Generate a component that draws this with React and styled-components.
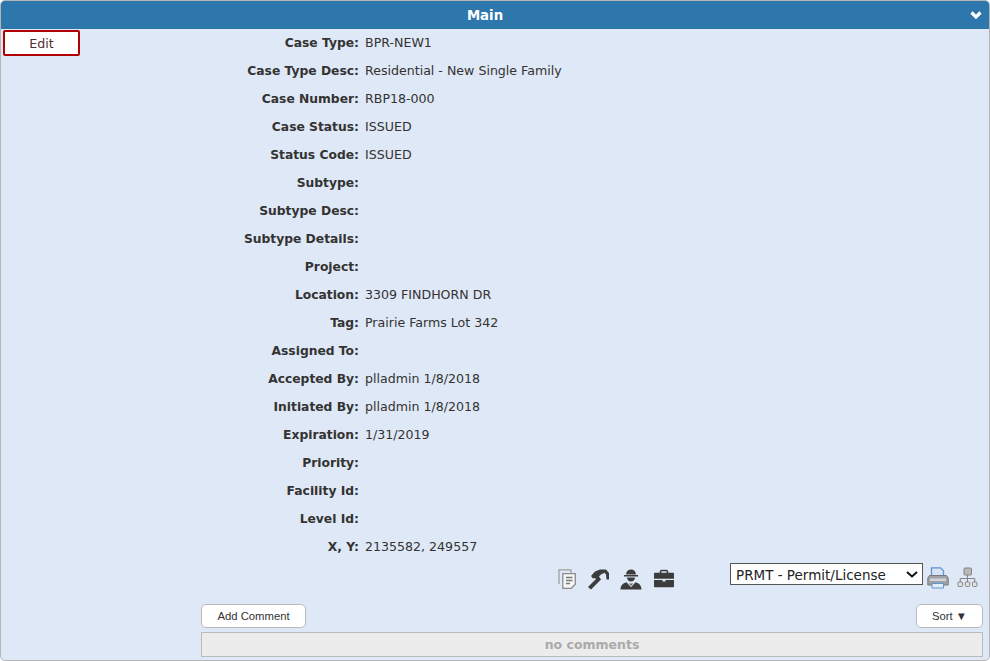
import React from 'react';
import styled, { createGlobalStyle } from 'styled-components';

const GlobalStyle = createGlobalStyle`
  html, body {
    margin: 0;
    padding: 0;
    background: #fff;
  }
  body {
    font-family: "DejaVu Sans", Verdana, sans-serif;
    font-size: 12.6px;
    color: #333;
  }
`;

const Panel = styled.div`
  box-sizing: border-box;
  width: 990px;
  height: 661px;
  display: flex;
  flex-direction: column;
  background: #dfe8f6;
  border: 1px solid #b5b5b5;
  border-radius: 5px;
  overflow: hidden;
`;

const Header = styled.div`
  position: relative;
  height: 28px;
  flex: none;
  display: flex;
  align-items: center;
  justify-content: center;
  padding-right: 20px;
  background: #2e77ad;
  color: #fff;
  font-size: 13.3px;
  font-weight: 700;
`;

const Chevron = styled.svg`
  position: absolute;
  right: 6px;
  top: 9px;
  width: 14px;
  height: 10px;
`;

const Body = styled.div`
  display: flex;
  align-items: flex-start;
  padding: 0 6px 0 2px;
`;

const EditButton = styled.button`
  box-sizing: border-box;
  flex: none;
  width: 77px;
  height: 26px;
  margin-top: 1px;
  background: #fff;
  border: 2px solid #b00000;
  border-radius: 2px;
  color: #4d3030;
  font: 12.6px "DejaVu Sans", Verdana, sans-serif;
  padding: 1px 0 0;
`;

const Fields = styled.div`
  display: flex;
  flex-direction: column;
`;

const Row = styled.div`
  display: flex;
  align-items: baseline;
  height: 28px;
  line-height: 28px;
`;

const Label = styled.div`
  width: 279px;
  text-align: right;
  font-size: 12.3px;
  font-weight: 700;
  white-space: nowrap;
`;

const Value = styled.div`
  margin-left: 6px;
  white-space: nowrap;
`;

const Toolbar = styled.div`
  display: flex;
  align-items: flex-start;
  height: 42px;
  padding-top: 1px;
  box-sizing: border-box;
  margin-top: 1px;
`;

const IconGroup = styled.div`
  display: flex;
  align-items: center;
  gap: 11px;
  margin-left: 557px;
  margin-top: 5px;
  width: 172px;
`;

const SelectWrap = styled.div`
  position: relative;
  width: 193px;
  height: 22px;
`;

const Select = styled.select`
  box-sizing: border-box;
  display: block;
  width: 100%;
  height: 100%;
  appearance: none;
  background: #fff;
  border: 1px solid #555;
  border-radius: 0;
  color: #222;
  font: 13.5px "DejaVu Sans", Verdana, sans-serif;
  padding: 1px 0 0 5px;
`;

const SelectArrow = styled.svg`
  position: absolute;
  right: 5px;
  top: 8px;
  width: 12px;
  height: 7px;
  pointer-events: none;
`;

const ToolIcon = styled.svg`
  display: block;
  flex: none;
  width: ${(p) => p.$w || 22}px;
  height: ${(p) => p.$h || 22}px;
  margin-left: ${(p) => p.$left || 0}px;
  margin-top: ${(p) => p.$top || 0}px;
`;

const CommentBar = styled.div`
  display: flex;
  justify-content: space-between;
  margin: 0 6px 4px 200px;
`;

const SmallButton = styled.button`
  box-sizing: border-box;
  height: 24px;
  width: ${(p) => p.$width}px;
  background: #fff;
  border: 1px solid #bbb;
  border-radius: 5px;
  color: #333;
  font: 11.3px "Liberation Sans", Arial, sans-serif;
  padding: 0;
`;

const NoComments = styled.div`
  box-sizing: border-box;
  height: 25px;
  margin: 0 6px 0 200px;
  display: flex;
  align-items: center;
  justify-content: center;
  background: #ececec;
  border: 1px solid #bbb;
  color: #aaa;
  font-size: 12.5px;
  font-weight: 700;
`;

const fields = [
  ['Case Type:', 'BPR-NEW1'],
  ['Case Type Desc:', 'Residential - New Single Family'],
  ['Case Number:', 'RBP18-000'],
  ['Case Status:', 'ISSUED'],
  ['Status Code:', 'ISSUED'],
  ['Subtype:', ''],
  ['Subtype Desc:', ''],
  ['Subtype Details:', ''],
  ['Project:', ''],
  ['Location:', '3309 FINDHORN DR'],
  ['Tag:', 'Prairie Farms Lot 342'],
  ['Assigned To:', ''],
  ['Accepted By:', 'plladmin 1/8/2018'],
  ['Initiated By:', 'plladmin 1/8/2018'],
  ['Expiration:', '1/31/2019'],
  ['Priority:', ''],
  ['Facility Id:', ''],
  ['Level Id:', ''],
  ['X, Y:', '2135582, 249557'],
];

const CopyIcon = () => (
  <ToolIcon viewBox="0 0 18 20" $w={18} $h={20}>
    <path d="M1 15V.8h12V4" fill="none" stroke="#a0a0a0" strokeWidth="1.300" />
    <path d="M4.800 4.700h12.500v10.500l-4 4.100H4.800z" fill="#f6f6f6" stroke="#8c8c8c" strokeWidth="1.300" />
    <path d="M8 8.500h6.500M8 11.500h6.500M8 14.500h4" stroke="#7a7a7a" strokeWidth="1.300" />
  </ToolIcon>
);

const WrenchIcon = () => (
  <ToolIcon viewBox="0 0 22 22">
    <path
      d="M1 19 4 21.500 14 11.500 12 8.500 14 6.500 17.500 4.800 19 6.500 19.500 11.500H22V5L19 1.500H13L8 3.500 4 8 6 10.500 8 10 9 11z"
      fill="#3c3c3c"
    />
  </ToolIcon>
);

const WorkerIcon = () => (
  <ToolIcon viewBox="0 0 22 22">
    <path d="M4 7h14v1.500H4zM6 6.500C6.300 3.300 8.300 1.500 11 1.500s4.700 1.800 5 5z" fill="#3c3c3c" />
    <path d="M7 9.500h8c-.2 2.500-1.800 4-4 4s-3.800-1.500-4-4z" fill="#3c3c3c" />
    <path d="M.5 21.500c0-4 2.500-6.500 6-7.300l4.500 5 4.500-5c3.500.8 6 3.300 6 7.300z" fill="#3c3c3c" />
    <path d="M8.800 15.500h4.400L11 18z" fill="#6c6c6c" />
  </ToolIcon>
);

const CaseIcon = () => (
  <ToolIcon viewBox="0 0 22 22">
    <path d="M7.500 5.500V3.800c0-.7.500-1.300 1.300-1.300h4.400c.8 0 1.300.6 1.300 1.300v1.700" fill="none" stroke="#3c3c3c" strokeWidth="1.600" />
    <path d="M2 4.800h18c.6 0 1 .4 1 1v5H1v-5c0-.6.400-1 1-1z" fill="#3c3c3c" />
    <path d="M1 12h8.500v1.500h3V12H21v6.200c0 .6-.4 1-1 1H2c-.6 0-1-.4-1-1z" fill="#3c3c3c" />
  </ToolIcon>
);

const PrintIcon = () => (
  <ToolIcon viewBox="0 0 22 22" $left={4} $top={4}>
    <path d="M4.500 10V.8h9l3 3V10z" fill="#d6e4f6" stroke="#5f94cf" strokeWidth="1.300" />
    <path d="M.8 11 2.500 8.500h17L21.200 11v7H.8z" fill="#9ea2a6" stroke="#777b80" />
    <path d="M3 11.500h16v2.500H3z" fill="#d2d5d8" />
    <path d="M5 16.500h11.500v4.500H5z" fill="#e4edf8" stroke="#5f94cf" />
  </ToolIcon>
);

const TreeIcon = () => (
  <ToolIcon viewBox="0 0 22 22" $left={8} $top={4}>
    <g fill="#e2e2e2" stroke="#858585">
      <rect x="7" y="1" width="7.500" height="7" rx="1" fill="#b9b9b9" />
      <rect x="1" y="15" width="4.500" height="4.500" rx="1" />
      <rect x="8.250" y="15" width="4.500" height="4.500" rx="1" />
      <rect x="15.500" y="15" width="4.500" height="4.500" rx="1" />
    </g>
    <path d="M10.500 8v7M3.250 15v-3.500h14.500V15" fill="none" stroke="#858585" />
  </ToolIcon>
);

const App = () => {
  return (
    <>
      <GlobalStyle />
      <Panel>
        <Header>
          Main
          <Chevron viewBox="0 0 14 10">
            <path d="M2.500 2.500 7 7l4.500-4.500" fill="none" stroke="#fff" strokeWidth="3.200" />
          </Chevron>
        </Header>
        <Body>
          <EditButton>Edit</EditButton>
          <Fields>
            {fields.map(([label, value]) => (
              <Row key={label}>
                <Label>{label}</Label>
                <Value>{value}</Value>
              </Row>
            ))}
          </Fields>
        </Body>
        <Toolbar>
          <IconGroup>
            <CopyIcon />
            <WrenchIcon />
            <WorkerIcon />
            <CaseIcon />
          </IconGroup>
          <SelectWrap>
            <Select defaultValue="PRMT">
              <option value="PRMT">PRMT - Permit/License</option>
            </Select>
            <SelectArrow viewBox="0 0 12 7">
              <path d="M1 1l5 4.500L11 1" fill="none" stroke="#111" strokeWidth="2" />
            </SelectArrow>
          </SelectWrap>
          <PrintIcon />
          <TreeIcon />
        </Toolbar>
        <CommentBar>
          <SmallButton $width={105}>Add Comment</SmallButton>
          <SmallButton $width={67}>Sort ▼</SmallButton>
        </CommentBar>
        <NoComments>no comments</NoComments>
      </Panel>
    </>
  );
};

export default App;
